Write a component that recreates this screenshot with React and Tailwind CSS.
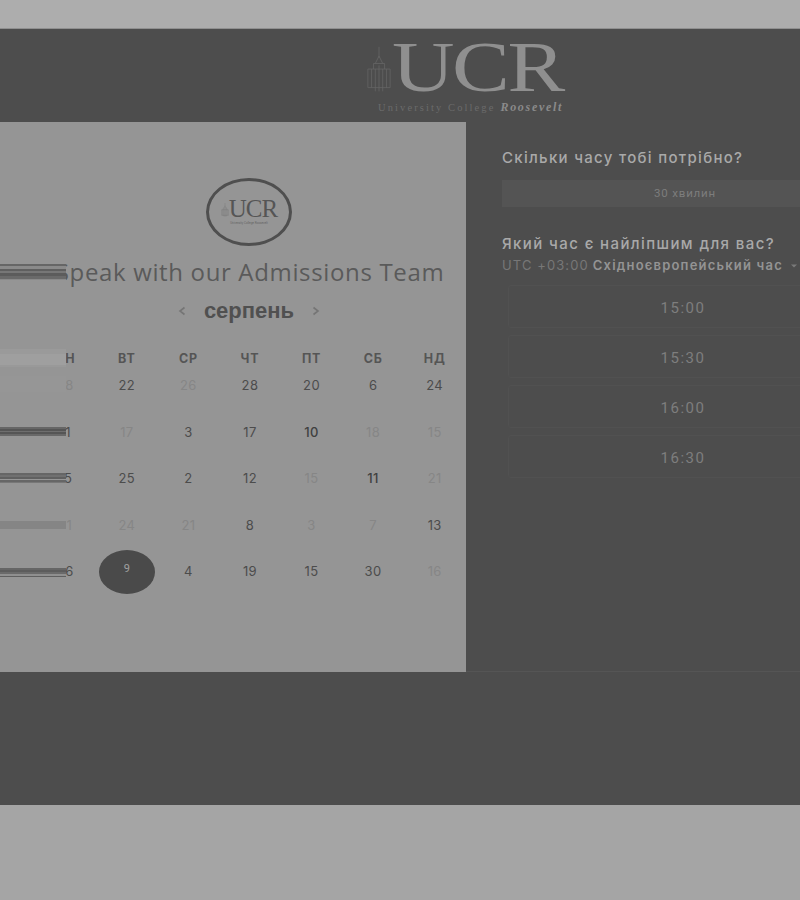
import React from "react";

const rows = [
  [["28", 2], ["22", 0], ["26", 2], ["28", 0], ["20", 0], ["6", 0], ["24", 0]],
  [["11", 0], ["17", 2], ["3", 0], ["17", 0], ["10", 1], ["18", 2], ["15", 2]],
  [["15", 0], ["25", 0], ["2", 0], ["12", 0], ["15", 2], ["11", 1], ["21", 2]],
  [["21", 2], ["24", 2], ["21", 2], ["8", 0], ["3", 2], ["7", 2], ["13", 0]],
  [["26", 0], ["9", 3], ["4", 0], ["19", 0], ["15", 0], ["30", 0], ["16", 2]],
];
const heads = ["ПН", "ВТ", "СР", "ЧТ", "ПТ", "СБ", "НД"];
const times = ["15:00", "15:30", "16:00", "16:30"];
const P = "#959595";

function Tower({ className }) {
  return (
    <svg viewBox="0 0 28 50" className={className} fill="none" stroke="#666666" strokeWidth="0.8">
      <path d="M14 0V12M10 18L14 10L18 18M8 24V18H20V24M2 24H26V44H2ZM6 24V44M10 24V48M14 20V48M18 24V48M22 24V44" />
    </svg>
  );
}

function Cell({ v, kind }) {
  if (kind === 3) {
    return (
      <div className="flex h-[30px] items-center justify-center">
        <div className="flex h-[44px] w-[56px] shrink-0 items-center justify-center rounded-[50%] bg-[#4a4a4a] pb-[6px] text-[11px] text-[#a0a0a0]">{v}</div>
      </div>
    );
  }
  const c = kind === 2 ? "text-[#868686]" : kind === 1 ? "font-medium text-[#404040]" : "text-[#4c4c4c]";
  return <div className={`flex h-[30px] items-center justify-center font-['Inter',sans-serif] text-[13px] tracking-[0.4px] ${c}`}>{v}</div>;
}

function Bar({ top, lines }) {
  return (
    <div className="absolute left-0 flex w-[66px] flex-col" style={{ top }}>
      {lines.map(([h, col], i) => (
        <div key={i} style={{ height: h, background: col }} />
      ))}
    </div>
  );
}

export default function App() {
  return (
    <div className="h-[900px] w-[800px] overflow-hidden bg-[#a8a8a8] font-['Roboto',sans-serif]">
      <div className="h-[28px] bg-[#adadad]" />
      <header className="flex h-[94px] border-t border-[#8f8f8f] bg-[#4d4d4d] pl-[364px]">
        <div className="mt-[12px] flex h-[78px] w-[204px] flex-col">
          <div className="flex h-[58px] items-end">
            <Tower className="mb-[5px] ml-[2px] h-[48px] w-[26px] shrink-0" />
            <span className="origin-left scale-x-[1.22] font-['Liberation_Serif',serif] text-[71px] leading-[64px] tracking-[-2px] text-[#8f8f8f]">UCR</span>
          </div>
          <div className="mt-[-1px] flex items-baseline pl-[14px] font-['Liberation_Serif',serif] whitespace-nowrap">
            <span className="text-[10.5px] tracking-[2.1px] text-[#6b6b6b]">University College</span>
            <span className="ml-[5px] text-[12px] font-bold italic tracking-[1.7px] text-[#8a8a8a]">Roosevelt</span>
          </div>
        </div>
      </header>
      <main className="flex h-[550px]">
        <section className="relative h-full w-[466px] shrink-0 overflow-hidden bg-[#959595]">
          <div className="ml-[206px] mt-[56px] flex h-[68px] w-[86px] flex-col items-center justify-center rounded-[50%] border-[3px] border-[#4f4f4f]">
            <div className="flex items-end">
              <Tower className="mb-[2px] h-[14px] w-[8px]" />
              <span className="font-['Liberation_Serif',serif] text-[25px] leading-[20px] tracking-[-1px] text-[#555555]">UCR</span>
            </div>
            <span className="mt-[2px] text-[3px] leading-[4px] text-[#666666]">University College Roosevelt</span>
          </div>
          <h1 className="ml-[32px] mt-[10px] w-[434px] pl-[2px] text-center font-['Open_Sans',sans-serif] text-[24px] leading-[32px] tracking-[0.65px] text-[#5a5a5a] whitespace-nowrap">
            Speak with our Admissions Team
          </h1>
          <div className="mt-[9px] flex h-[28px] items-center justify-center gap-[16px] pl-[32px]">
            <svg width="10" height="12" viewBox="0 0 10 12" fill="none" stroke="#757575" strokeWidth="1.6"><path d="M7.5 2.5L3 6L7.5 9.5" /></svg>
            <span className="w-[92px] text-center font-['Liberation_Sans',sans-serif] text-[22px] font-bold leading-[28px] text-[#505050]">серпень</span>
            <svg width="10" height="12" viewBox="0 0 10 12" fill="none" stroke="#757575" strokeWidth="1.6"><path d="M2.5 2.5L7 6L2.5 9.5" /></svg>
          </div>
          <div className="ml-[34.5px] mt-[22px] grid w-[431px] grid-cols-7">
            {heads.map((h) => (
              <div key={h} className="flex h-[24px] items-center justify-center font-['Inter',sans-serif] text-[12.5px] font-bold tracking-[0.8px] text-[#555555]">{h}</div>
            ))}
          </div>
          <div className="ml-[34.5px] grid w-[431px] grid-cols-7 gap-y-[16.5px]">
            {rows.flat().map(([v, k], i) => (
              <Cell key={i} v={v} kind={k} />
            ))}
          </div>
          <Bar top={140} lines={[[2, P], [2, "#666666"], [3, "#8a8a8a"], [2, "#5f5f5f"], [2, "#777777"], [3, "#5c5c5c"], [3, "#6a6a6a"], [1, "#8a8a8a"], [3, P]]} />
          <Bar top={227} lines={[[5, "#9a9a9a"], [11, "#9f9f9f"], [2, "#999999"]]} />
          <Bar top={254} lines={[[16, "#969696"]]} />
          <Bar top={302} lines={[[3, P], [2, "#666666"], [2, "#555555"], [1, "#6e6e6e"], [2, "#555555"], [2, "#686868"], [3, P]]} />
          <Bar top={348} lines={[[3, P], [2, "#666666"], [2, "#707070"], [2, "#606060"], [1, P], [2, "#666666"], [1, "#777777"], [3, P]]} />
          <Bar top={396} lines={[[3, P], [8, "#858585"], [3, P]]} />
          <Bar top={443} lines={[[3, P], [2, "#666666"], [2, "#5c5c5c"], [2, "#6a6a6a"], [2, "#8f8f8f"], [1, "#5f5f5f"], [3, P]]} />
        </section>
        <section className="w-[334px] shrink-0 border-b border-[#555555] bg-[#4d4d4d] pl-[36px]">
          <h2 className="mt-[26px] font-['Inter',sans-serif] text-[15px] font-medium leading-[20px] tracking-[1.3px] text-[#a9a9a9] whitespace-nowrap">Скільки часу тобі потрібно?</h2>
          <div className="mt-[12px] flex h-[27px] w-[366px] items-center justify-center bg-[#545454] pt-[1px] text-[11.5px] tracking-[0.8px] text-[#7d7d7d]">30 хвилин</div>
          <h2 className="mt-[27px] font-['Inter',sans-serif] text-[15px] font-medium leading-[20px] tracking-[1.4px] text-[#a9a9a9] whitespace-nowrap">Який час є найліпшим для вас?</h2>
          <div className="mt-[3px] flex h-[18px] items-center whitespace-nowrap font-['Inter',sans-serif] text-[13px]">
            <span className="tracking-[1.1px] text-[#777777]">UTC +03:00</span>
            <span className="ml-[4px] font-semibold tracking-[1.2px] text-[#949494]">Східноєвропейський час</span>
            <svg className="ml-[7px]" width="8" height="6" viewBox="0 0 8 6" fill="#7a7a7a"><path d="M1 1.5H7L4 4.5Z" /></svg>
          </div>
          <div className="ml-[6px] mt-[10px] flex w-[354px] flex-col gap-[7px]">
            {times.map((t) => (
              <div key={t} className="flex h-[43px] items-center justify-center rounded-[3px] border border-[#515151] pr-[4px] pt-[3px] text-[15px] tracking-[1.5px] text-[#7e7e7e]">{t}</div>
            ))}
          </div>
        </section>
      </main>
      <div className="h-[133px] bg-[#4d4d4d]" />
      <div className="h-[95px] bg-[#a5a5a5]" />
    </div>
  );
}
